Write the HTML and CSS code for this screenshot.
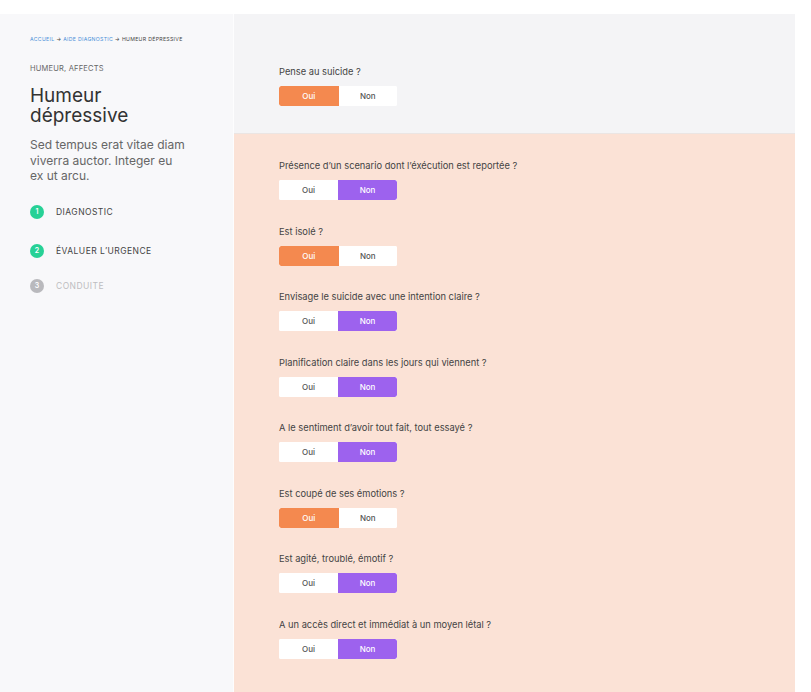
FILE: index.html
```html
<!DOCTYPE html>
<html lang="fr">
<head>
<meta charset="utf-8">
<title>Humeur dépressive</title>
<link rel="stylesheet" href="styles.css">
</head>
<body>
<div class="page">
  <aside class="sidebar">
    <nav class="crumbs"><a href="#">Accueil</a> → <a href="#">Aide diagnostic</a> → <span>Humeur dépressive</span></nav>
    <div class="category">Humeur, affects</div>
    <h1 class="title">Humeur dépressive</h1>
    <p class="intro">Sed tempus erat vitae diam viverra auctor. Integer eu ex ut arcu.</p>
    <ol class="steps">
      <li class="step done"><span class="num">1</span><span class="label">Diagnostic</span></li>
      <li class="step done"><span class="num">2</span><span class="label">Évaluer l’urgence</span></li>
      <li class="step todo"><span class="num">3</span><span class="label">Conduite</span></li>
    </ol>
  </aside>
  <main class="main">
    <section class="head">
      <div class="q">
        <div class="q-label">Pense au suicide ?</div>
        <div class="toggle"><button class="opt yes on">Oui</button><button class="opt">Non</button></div>
      </div>
    </section>
    <section class="body">
      <div class="q">
        <div class="q-label">Présence d’un scenario dont l’éxécution est reportée ?</div>
        <div class="toggle"><button class="opt">Oui</button><button class="opt no on">Non</button></div>
      </div>
      <div class="q">
        <div class="q-label">Est isolé ?</div>
        <div class="toggle"><button class="opt yes on">Oui</button><button class="opt">Non</button></div>
      </div>
      <div class="q">
        <div class="q-label">Envisage le suicide avec une intention claire ?</div>
        <div class="toggle"><button class="opt">Oui</button><button class="opt no on">Non</button></div>
      </div>
      <div class="q">
        <div class="q-label">Planification claire dans les jours qui viennent ?</div>
        <div class="toggle"><button class="opt">Oui</button><button class="opt no on">Non</button></div>
      </div>
      <div class="q">
        <div class="q-label">A le sentiment d’avoir tout fait, tout essayé ?</div>
        <div class="toggle"><button class="opt">Oui</button><button class="opt no on">Non</button></div>
      </div>
      <div class="q">
        <div class="q-label">Est coupé de ses émotions ?</div>
        <div class="toggle"><button class="opt yes on">Oui</button><button class="opt">Non</button></div>
      </div>
      <div class="q">
        <div class="q-label">Est agité, troublé, émotif ?</div>
        <div class="toggle"><button class="opt">Oui</button><button class="opt no on">Non</button></div>
      </div>
      <div class="q">
        <div class="q-label">A un accès direct et immédiat à un moyen létal ?</div>
        <div class="toggle"><button class="opt">Oui</button><button class="opt no on">Non</button></div>
      </div>
    </section>
  </main>
</div>
</body>
</html>
```

FILE: styles.css
```css
* { box-sizing: border-box; }
html, body { margin: 0; padding: 0; background: #ffffff; }
body {
  font-family: Inter, "Noto Sans", "Liberation Sans", sans-serif;
  color: #444;
  height: 692px;
  overflow: hidden;
}
.page {
  display: flex;
  width: 795px;
  margin-top: 14px;
  min-height: 678px;
}
.sidebar {
  width: 234px;
  flex: none;
  background: #f8f8fa;
  border-right: 1px solid #fdfdfe;
  padding: 21px 30px 0 30px;
}
.crumbs {
  font-size: 5.2px;
  letter-spacing: 0.3px;
  text-transform: uppercase;
  color: #444;
  line-height: 8px;
}
.crumbs a { color: #4a90d9; text-decoration: none; }
.category {
  margin-top: 21px;
  font-size: 7.5px;
  letter-spacing: 0.2px;
  text-transform: uppercase;
  color: #666;
  line-height: 10px;
}
.title {
  margin: 12px 0 0 0;
  font-size: 19px;
  font-weight: 400;
  line-height: 20px;
  color: #333;
}
.intro {
  margin: 11px 0 0 0;
  font-size: 12px;
  line-height: 15.5px;
  color: #666;
  width: 156px;
}
.steps {
  list-style: none;
  margin: 21px 0 0 0;
  padding: 0;
  display: flex;
  flex-direction: column;
}
.step {
  display: flex;
  align-items: center;
  gap: 12px;
  height: 14px;
}
.step + .step { margin-top: 25px; }
.step.todo { margin-top: 21px; }
.num {
  width: 14px;
  height: 14px;
  border-radius: 50%;
  background: #27d196;
  color: #fff;
  font-size: 7px;
  font-weight: 600;
  display: flex;
  align-items: center;
  justify-content: center;
}
.label {
  font-size: 8.5px;
  letter-spacing: 0.45px;
  text-transform: uppercase;
  color: #444;
}
.todo .num { background: #b9b9bd; }
.todo .label { color: #bdbdc0; }

.main {
  flex: 1;
  display: flex;
  flex-direction: column;
}
.head {
  background: #f4f4f6;
  height: 120px;
  padding: 52px 0 0 45px;
  border-bottom: 1px solid #ebe5e3;
}
.head .toggle { margin-top: 8px; }
.body {
  flex: 1;
  background: #fbe2d6;
  padding: 26px 0 0 45px;
}
.q-label {
  font-size: 9.3px;
  line-height: 12px;
  color: #444;
}
.toggle {
  display: flex;
  width: 118px;
  height: 20px;
  border-radius: 2px;
  overflow: hidden;
  background: #fff;
}
.body .q { margin-bottom: 25.5px; }
.body .toggle { margin-top: 8px; }
.opt {
  width: 59px;
  height: 20px;
  border: 0;
  padding: 0;
  margin: 0;
  background: #fff;
  color: #555;
  font-family: inherit;
  font-size: 8px;
  font-weight: 500;
}
.opt.on { color: #fff; }
.opt.yes.on { background: #f4894f; width: 60px; border-radius: 2px 0 0 2px; }
.opt.no.on { background: #9d62ee; border-radius: 0 2px 2px 0; }
```
